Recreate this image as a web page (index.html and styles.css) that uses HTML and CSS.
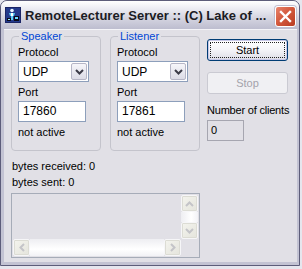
FILE: index.html
```html
<!DOCTYPE html>
<html>
<head>
<meta charset="utf-8">
<link rel="stylesheet" href="styles.css">
</head>
<body>
<div class="window">
  <div class="titlebar">
    <svg class="appicon" width="16" height="16" viewBox="0 0 16 16">
      <rect x="0" y="0" width="16" height="16" fill="#1b2566"/>
      <rect x="1" y="1" width="14" height="14" fill="#243a8c"/>
      <circle cx="7" cy="3.5" r="1.8" fill="#e8f4ff"/>
      <path d="M4 6h6l-1 3H8v4H6V9H5z" fill="#5fd0f0"/>
      <path d="M6 6h2v3H6z" fill="#ffffff"/>
      <rect x="9" y="9" width="5" height="5" fill="#0a0a18"/>
      <rect x="10" y="10" width="3" height="2" fill="#6fd8ff"/>
      <rect x="2" y="11" width="4" height="3" fill="#0a0a18"/>
      <rect x="3" y="12" width="2" height="1" fill="#9fe8ff"/>
    </svg>
    <span class="title">RemoteLecturer Server :: (C) Lake of ...</span>
    <div class="close">
      <svg width="13" height="13" viewBox="0 0 13 13">
        <path d="M2 2L11 11M11 2L2 11" stroke="#fff" stroke-width="2.4" stroke-linecap="square"/>
      </svg>
    </div>
  </div>
  <div class="client">
    <div class="top">
      <fieldset class="group">
        <legend>Speaker</legend>
        <div class="lbl">Protocol</div>
        <div class="combo"><span class="val">UDP</span><span class="dd"><svg width="9" height="6" viewBox="0 0 9 6"><path d="M1 1l3.5 3.5L8 1" fill="none" stroke="#3c3c48" stroke-width="2"/></svg></span></div>
        <div class="lbl">Port</div>
        <div class="edit">17860</div>
        <div class="lbl status">not active</div>
      </fieldset>
      <fieldset class="group listener">
        <legend>Listener</legend>
        <div class="lbl">Protocol</div>
        <div class="combo"><span class="val">UDP</span><span class="dd"><svg width="9" height="6" viewBox="0 0 9 6"><path d="M1 1l3.5 3.5L8 1" fill="none" stroke="#3c3c48" stroke-width="2"/></svg></span></div>
        <div class="lbl">Port</div>
        <div class="edit">17861</div>
        <div class="lbl status">not active</div>
      </fieldset>
      <div class="side">
        <div class="btn default"><span class="focus">Start</span></div>
        <div class="btn disabled">Stop</div>
        <div class="lbl clients">Number of clients</div>
        <div class="edit ro">0</div>
      </div>
    </div>
    <div class="stat first">bytes received: 0</div>
    <div class="stat">bytes sent: 0</div>
    <div class="log">
      <div class="logbody">
        <div class="logtext"></div>
        <div class="vscroll">
          <div class="sbtn"><svg width="9" height="6" viewBox="0 0 9 6"><path d="M1 5l3.5-3.5L8 5" fill="none" stroke="#c4c4c8" stroke-width="2"/></svg></div>
          <div class="vtrack"></div>
          <div class="sbtn"><svg width="9" height="6" viewBox="0 0 9 6"><path d="M1 1l3.5 3.5L8 1" fill="none" stroke="#c4c4c8" stroke-width="2"/></svg></div>
        </div>
      </div>
      <div class="hrow">
        <div class="hscroll">
          <div class="sbtn"><svg width="6" height="9" viewBox="0 0 6 9"><path d="M5 1L1.5 4.5 5 8" fill="none" stroke="#c4c4c8" stroke-width="2"/></svg></div>
          <div class="htrack"></div>
          <div class="sbtn"><svg width="6" height="9" viewBox="0 0 6 9"><path d="M1 1l3.5 3.5L1 8" fill="none" stroke="#c4c4c8" stroke-width="2"/></svg></div>
        </div>
        <div class="corner"></div>
      </div>
    </div>
  </div>
</div>
</body>
</html>
```

FILE: styles.css
```css
html, body {
  margin: 0;
  padding: 0;
  background: #e6e6ee;
}
body {
  font-family: "Liberation Sans", Arial, sans-serif;
  font-size: 11px;
  color: #000;
}
.window {
  width: 300px;
  height: 266px;
  box-sizing: border-box;
  border: 1px solid #5d5d7a;
  border-radius: 7px 7px 0 0;
  background: #c3c3d3;
  display: flex;
  flex-direction: column;
  overflow: hidden;
}
.titlebar {
  height: 28px;
  flex: none;
  display: flex;
  align-items: center;
  padding: 0 3px 0 4px;
  background: linear-gradient(#ffffff 0%, #eeeef4 25%, #d8d8e3 55%, #c9c9d8 80%, #bdbdcf 100%);
}
.appicon {
  flex: none;
  margin-right: 4px;
}
.title {
  flex: 1;
  font-weight: bold;
  font-size: 13px;
  color: #1c1c24;
  white-space: nowrap;
  overflow: hidden;
}
.close {
  flex: none;
  width: 19px;
  height: 19px;
  margin-top: 3px;
  border: 1px solid #fff;
  border-radius: 3px;
  background: linear-gradient(135deg, #e8846c 0%, #d45a3e 45%, #b83c22 100%);
  display: flex;
  align-items: center;
  justify-content: center;
  box-shadow: 0 0 0 1px #c0bfd0;
}
.client {
  flex: 1;
  margin: 0 2px 3px 3px;
  background: #e1e0e6;
  border-top: 1px solid #f4f4f8;
  padding: 0 0 0 7px;
}
.top {
  display: flex;
  align-items: flex-start;
}
.group {
  margin: 0;
  width: 90px;
  height: 121px;
  box-sizing: border-box;
  border: 1px solid #c4c4cc;
  border-radius: 4px;
  padding: 0 0 0 6px;
  margin-right: 9px;
}
.group.listener {
  margin-right: 7px;
}
.group legend {
  padding: 0 2px;
  margin-left: 1px;
  color: #0046d5;
  line-height: 13px;
}
.lbl {
  line-height: 13px;
  height: 13px;
  white-space: nowrap;
}
.group .lbl {
  margin-top: 4px;
}
.group .lbl:first-of-type {
  margin-top: 3px;
}
.combo {
  margin-top: 2px;
  width: 71px;
  height: 21px;
  box-sizing: border-box;
  border: 1px solid #8d9fbb;
  background: #fff;
  display: flex;
  align-items: center;
  justify-content: space-between;
  padding: 1px;
}
.combo .val {
  padding-left: 3px;
  font-size: 12px;
}
.dd {
  width: 16px;
  height: 17px;
  box-sizing: border-box;
  border: 1px solid #b6b6c6;
  border-radius: 2px;
  background: linear-gradient(#f6f6fa, #dcdce6);
  display: flex;
  align-items: center;
  justify-content: center;
}
.edit {
  margin-top: 2px;
  width: 68px;
  height: 21px;
  box-sizing: border-box;
  border: 1px solid #8d9fbb;
  background: #fff;
  font-size: 12px;
  line-height: 19px;
  padding-left: 4px;
}
.group .status {
  margin-top: 4px;
}
.side {
  width: 82px;
  padding-top: 9px;
}
.btn {
  width: 81px;
  height: 22px;
  box-sizing: border-box;
  border-radius: 3px;
  display: flex;
  align-items: center;
  justify-content: center;
}
.btn.default {
  border: 1px solid #003c74;
  background: linear-gradient(#ffffff 0%, #f4f4f8 50%, #dcdce6 100%);
  box-shadow: inset 0 0 0 1px #c8c8e8;
  padding: 2px;
}
.btn.default .focus {
  flex: 1;
  align-self: stretch;
  display: flex;
  align-items: center;
  justify-content: center;
  border: 1px dotted #222;
}
.btn.disabled {
  margin-top: 11px;
  border: 1px solid #cacad2;
  background: #f0f0f3;
  color: #a4a3ab;
}
.clients {
  margin-top: 10px;
  letter-spacing: -0.2px;
}
.edit.ro {
  width: 37px;
  margin-top: 3px;
  background: #e1e0e6;
  border-color: #a6a6b0;
  font-size: 11px;
  padding-left: 3px;
}
.stat {
  line-height: 13px;
  padding-left: 1px;
  margin-top: 3px;
}
.stat.first {
  margin-top: 9px;
}
.log {
  margin-top: 4px;
  width: 189px;
  height: 65px;
  box-sizing: border-box;
  border: 1px solid #a6acb8;
  display: flex;
  flex-direction: column;
  padding: 1px;
}
.logbody {
  flex: 1;
  display: flex;
}
.logtext {
  flex: 1;
}
.vscroll {
  width: 17px;
  display: flex;
  flex-direction: column;
}
.vtrack {
  flex: 1;
  background: linear-gradient(90deg, #eeeef2, #ffffff 60%, #f2f2f6);
}
.hrow {
  height: 17px;
  display: flex;
}
.hscroll {
  flex: 1;
  display: flex;
}
.htrack {
  flex: 1;
  background: linear-gradient(#eeeef2, #ffffff 60%, #f2f2f6);
}
.corner {
  width: 17px;
}
.sbtn {
  width: 17px;
  height: 17px;
  box-sizing: border-box;
  border: 1px solid #f6f6f8;
  border-radius: 2px;
  background: linear-gradient(135deg, #f4f4ee, #e4e4dc);
  box-shadow: 0 0 0 1px #dcdcd4 inset;
  display: flex;
  align-items: center;
  justify-content: center;
}
```
